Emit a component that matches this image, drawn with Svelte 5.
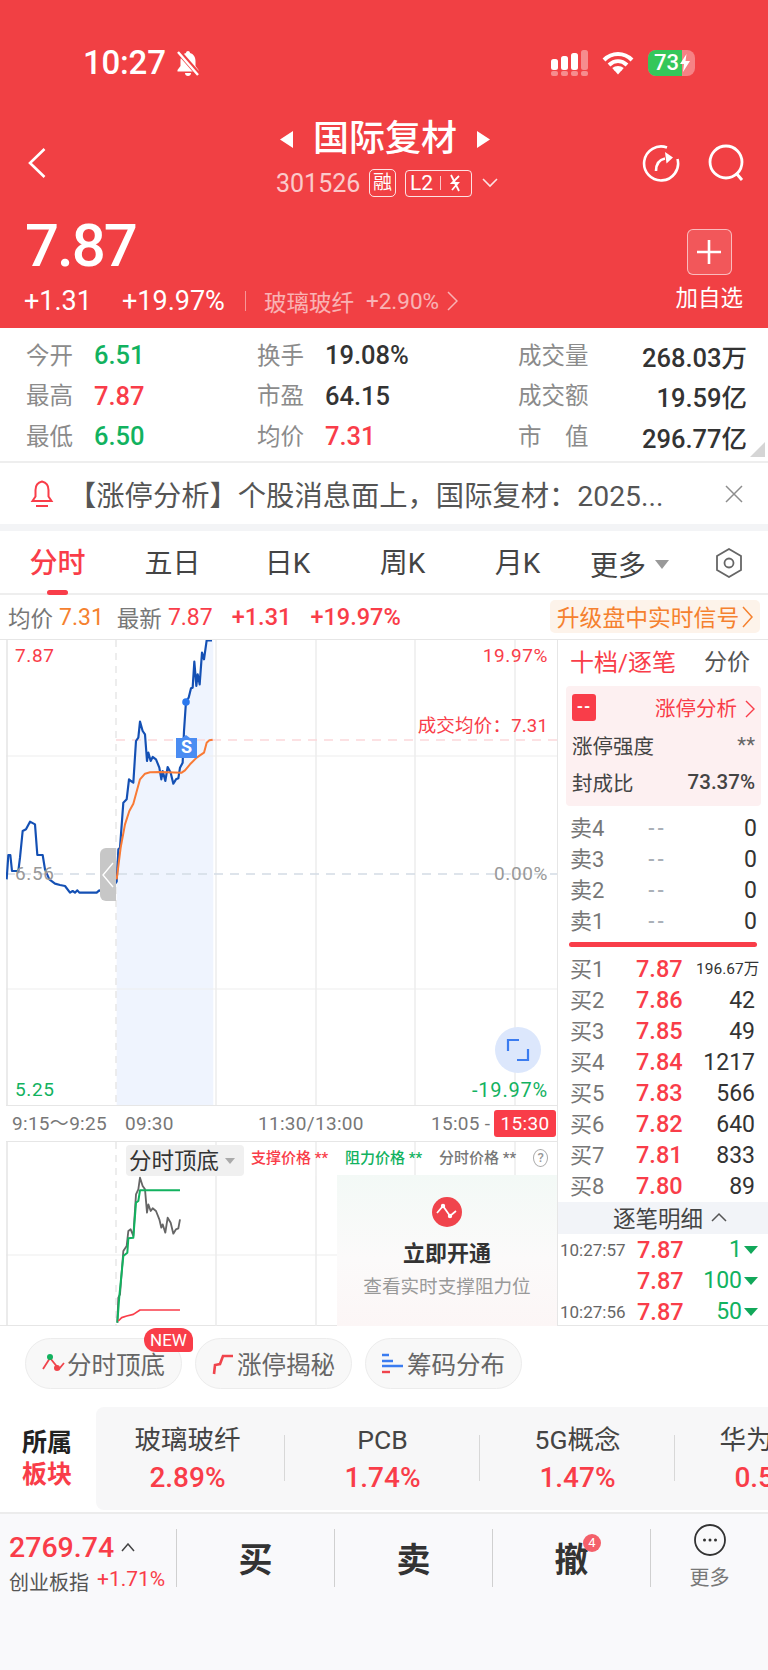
<script>
  const stats = [
    [
      { k: '今开', v: '6.51', c: 'green' },
      { k: '换手', v: '19.08%', c: '' },
      { k: '成交量', v: '268.03万', c: '' }
    ],
    [
      { k: '最高', v: '7.87', c: 'red' },
      { k: '市盈', v: '64.15', c: '' },
      { k: '成交额', v: '19.59亿', c: '' }
    ],
    [
      { k: '最低', v: '6.50', c: 'green' },
      { k: '均价', v: '7.31', c: 'red' },
      { k: '市　值', v: '296.77亿', c: '' }
    ]
  ];
  const tabs = ['分时', '五日', '日K', '周K', '月K'];
  const sells = ['卖4', '卖3', '卖2', '卖1'];
  const buys = [
    ['买1', '7.87', '196.67万'],
    ['买2', '7.86', '42'],
    ['买3', '7.85', '49'],
    ['买4', '7.84', '1217'],
    ['买5', '7.83', '566'],
    ['买6', '7.82', '640'],
    ['买7', '7.81', '833'],
    ['买8', '7.80', '89']
  ];
  const trades = [
    ['10:27:57', '7.87', '1'],
    ['', '7.87', '100'],
    ['10:27:56', '7.87', '50']
  ];
  const sectors = [
    ['玻璃玻纤', '2.89%'],
    ['PCB', '1.74%'],
    ['5G概念', '1.47%'],
    ['华为概念', '0.58%']
  ];

  // traced at 3x from the chart
  const blue = '20,745 25,672 31,672 36,720 55,720 60,680 68,600 78,595 90,572 105,580 112,672 128,672 135,715 148,745 165,758 180,762 195,765 210,785 218,780 225,785 232,778 238,785 290,785 298,778 310,785 330,785 340,765 350,752 355,655 360,650 370,515 380,505 387,445 393,450 400,455 408,330 415,320 420,272 428,300 435,310 441,390 445,365 452,390 458,378 468,385 478,410 484,445 488,420 496,450 503,408 512,425 520,458 528,445 535,442 540,410 548,395 552,300 558,212 566,200 573,172 578,170 583,92 589,165 593,130 599,160 606,65 612,85 620,28 636,28';
  const orange = '350,745 362,650 375,580 388,540 400,518 420,445 435,428 450,424 480,423 545,425 555,418 570,400 590,380 612,365 620,335 628,328 638,326';
  const area = blue.slice(blue.indexOf('350,752')) + ' 640,28 640,1425 350,1425';
  const gray = '352,1115 355,1040 360,1030 370,900 380,885 385,840 392,835 400,855 408,730 415,715 420,680 428,705 435,715 441,785 445,760 452,780 458,772 468,780 478,805 484,830 488,820 496,845 503,800 512,815 520,848 528,835 535,832 540,805';
  const greenLine = '352,1115 358,1035 370,915 382,905 385,862 400,860 408,755 415,750 420,718 540,718';
  const redLine = '355,1110 365,1100 380,1095 400,1090 420,1077 540,1077';
  const vlines = [216, 316, 415, 515];
</script>

<div class="page">
  <header class="head">
    <div class="status">
      <span class="time">10:27</span>
      <svg class="bell-off" viewBox="0 0 26 28" width="26" height="28">
        <path d="M13 2c-1 0-2 .8-2 2-3.600 1-5.500 4-5.500 8v5L2.500 21v1.500h21V21l-3-4v-5c0-4-1.900-7-5.500-8 0-1.200-1-2-2-2z" fill="#fff" />
        <path d="M10 24h6c0 1.800-1.300 3-3 3s-3-1.200-3-3z" fill="#fff" />
        <path d="M3 2l21 24" stroke="#f04145" stroke-width="5" />
        <path d="M3 3l20 23" stroke="#fff" stroke-width="2.400" />
      </svg>
      <span class="spring"></span>
      <svg viewBox="0 0 38 26" width="38" height="26">
        <rect x="0" y="9" width="7" height="11" rx="2.500" fill="#fff" />
        <rect x="10" y="6" width="7" height="14" rx="2.500" fill="#fff" />
        <rect x="20" y="3" width="7" height="17" rx="2.500" fill="#fff" />
        <rect x="30" y="0" width="7" height="20" rx="2.500" fill="#fff" opacity=".4" />
        <rect x="0" y="21" width="7" height="5" rx="2" fill="#fff" opacity=".4" />
        <rect x="10" y="21" width="7" height="5" rx="2" fill="#fff" opacity=".4" />
        <rect x="20" y="21" width="7" height="5" rx="2" fill="#fff" opacity=".4" />
        <rect x="30" y="21" width="7" height="5" rx="2" fill="#fff" opacity=".4" />
      </svg>
      <svg class="wifi" viewBox="0 0 32 24" width="32" height="24">
        <path d="M2 9c8-8 20-8 28 0M7 14c5.500-5 12.500-5 18 0M11.500 18.500c2.500-2 6.500-2 9 0" fill="none" stroke="#fff" stroke-width="4" />
        <path d="M12.500 19.500l3.500-3 3.500 3-3.500 4z" fill="#fff" />
      </svg>
      <div class="battery">
        <span class="bat-fill"></span>
        <span class="bat-num">73</span>
        <svg class="bolt" viewBox="0 0 10 18" width="10" height="18"><path d="M6.500 0L0 10h4l-1 8 7-11H5.500z" fill="#fff" /></svg>
      </div>
    </div>

    <div class="title-row">
      <svg class="back" viewBox="0 0 18 30" width="18" height="30"><path d="M16.500 1L2 15l14.500 14" fill="none" stroke="#fff" stroke-width="2.600" /></svg>
      <div class="title">
        <div class="name-line">
          <svg viewBox="0 0 13 17" width="13" height="17"><path d="M13 0v17L0 8.500z" fill="#fff" /></svg>
          <span class="name">国际复材</span>
          <svg viewBox="0 0 13 17" width="13" height="17"><path d="M0 0v17l13-8.500z" fill="#fff" /></svg>
        </div>
        <div class="code-line">
          <span class="code">301526</span>
          <span class="rong">融</span>
          <span class="l2">L2<i></i>
            <svg viewBox="0 0 14 20" width="14" height="20"><path d="M3 2l8 16M11 3L4 10h6l-6 7" fill="none" stroke="#fff" stroke-width="1.800" /></svg>
          </span>
          <svg class="caret" viewBox="0 0 16 10" width="16" height="10"><path d="M1 1l7 7 7-7" fill="none" stroke="#fff" stroke-width="1.600" /></svg>
        </div>
      </div>
      <div class="head-icons">
        <svg viewBox="0 0 38 38" width="38" height="38">
          <path d="M25 3.500A17 17 0 1 0 35.500 15" fill="none" stroke="#fff" stroke-width="2.600" />
          <path d="M14 27c0-6 2-11 9-12.500" fill="none" stroke="#fff" stroke-width="2.600" />
          <path d="M23 8l8 5.500-6.500 6z" fill="#fff" />
        </svg>
        <svg viewBox="0 0 38 38" width="38" height="38">
          <circle cx="18" cy="18" r="16" fill="none" stroke="#fff" stroke-width="2.800" />
          <path d="M28 29l6 7" stroke="#fff" stroke-width="3" />
        </svg>
      </div>
    </div>

    <div class="price-row">
      <div>
        <div class="price">7.87</div>
        <div class="change">
          <span>+1.31</span>
          <span>+19.97%</span>
          <i class="sep"></i>
          <span class="sector">玻璃玻纤</span>
          <span class="sector-pct">+2.90%</span>
          <svg viewBox="0 0 11 20" width="11" height="20"><path d="M1 1l9 9-9 9" fill="none" stroke="#fff" stroke-opacity=".6" stroke-width="1.500" /></svg>
        </div>
      </div>
      <div class="watch">
        <span class="plus">
          <svg viewBox="0 0 24 24" width="24" height="24"><path d="M12 0v24M0 12h24" stroke="#fff" stroke-width="2.600" /></svg>
        </span>
        <span class="watch-label">加自选</span>
      </div>
    </div>
  </header>

  <section class="stats">
    {#each stats as row}
      <div class="stat-row">
        {#each row as s, i}
          <div class="stat stat{i}">
            <span class="k">{s.k}</span>
            <span class="v {s.c}">{s.v}</span>
          </div>
        {/each}
      </div>
    {/each}
    <span class="corner"></span>
  </section>

  <section class="notice">
    <svg viewBox="0 0 24 28" width="24" height="28">
      <path d="M12 1.500c-4.500 1-6.500 4.500-6.500 8.500v6.500L2.500 21h19l-3-4.500V10c0-4-2-7.500-6.500-8.500zM6 26h12" fill="none" stroke="#f93d49" stroke-width="2" />
    </svg>
    <span class="notice-text">【涨停分析】个股消息面上，国际复材：2025...</span>
    <svg viewBox="0 0 18 18" width="18" height="18"><path d="M1 1l16 16M17 1L1 17" stroke="#8d8d8d" stroke-width="1.500" /></svg>
  </section>

  <nav class="tabs">
    {#each tabs as t, i}
      <div class="tab" class:on={i === 0}>{t}</div>
    {/each}
    <div class="more">更多<i class="tri"></i></div>
    <svg class="hex" viewBox="0 0 28 30" width="28" height="30">
      <path d="M14 1l12 7v14l-12 7-12-7V8z" fill="none" stroke="#666" stroke-width="1.800" />
      <circle cx="14" cy="15" r="4.500" fill="none" stroke="#666" stroke-width="1.800" />
    </svg>
  </nav>

  <section class="summary">
    <span class="gray">均价</span><span class="orange g1">7.31</span>
    <span class="gray g2">最新</span><span class="red g1">7.87</span>
    <span class="red g3">+1.31</span>
    <span class="red g3">+19.97%</span>
    <span class="upgrade">升级盘中实时信号
      <svg viewBox="0 0 11 22" width="11" height="22"><path d="M1 1l9 10-9 10" fill="none" stroke="#f5812f" stroke-width="1.500" /></svg>
    </span>
  </section>

  <main class="board">
    <div class="chart">
      <div class="upper">
        <svg viewBox="6 639 551 466" width="551" height="466">
          <g transform="translate(0 630) scale(.33333)">
            <polygon points={area} fill="#eff4fe" />
          </g>
          <path d="M6 755H557M6 988H557" stroke="#eeeeee" stroke-width="1.200" />
          <path d="M7 639V1105" stroke="#e4e4e4" stroke-width="1.500" />
          {#each vlines as x}
            <path d="M{x} 639V1105" stroke="#ececec" stroke-width="1.500" />
          {/each}
          <path d="M116 639V1105" stroke="#e2e2e2" stroke-width="1.200" stroke-dasharray="7 6" />
          <path d="M116 739H557" stroke="#fbd8da" stroke-width="1.500" stroke-dasharray="9 7" />
          <path d="M6 873H557" stroke="#d3dbe5" stroke-width="1.300" stroke-dasharray="9 7" />
          <g transform="translate(0 630) scale(.33333)">
            <polyline points={blue} fill="none" stroke="#1450b4" stroke-width="6.500" stroke-linejoin="round" />
            <polyline points={orange} fill="none" stroke="#f97a35" stroke-width="6" stroke-linejoin="round" />
          </g>
          <circle cx="186" cy="701" r="3.800" fill="#2a78ee" />
          <path d="M176 737h6l4-3 4 3h7v20h-21z" fill="#4a8cf2" />
        </svg>
        <span class="s-mark">S</span>
        <span class="hl tl red">7.87</span>
        <span class="hr tr red">19.97%</span>
        <span class="hr avg red">成交均价：7.31</span>
        <span class="hl mid mute">6.56</span>
        <span class="hr mid mute">0.00%</span>
        <span class="hl bl green">5.25</span>
        <span class="hr bl green wide">-19.97%</span>
        <span class="handle">
          <svg viewBox="0 0 12 26" width="12" height="26"><path d="M11 1L1 13l10 12" fill="none" stroke="#fff" stroke-width="1.400" /></svg>
        </span>
        <span class="expand">
          <svg viewBox="0 0 24 24" width="24" height="24"><path d="M2 13V2h11M22 11v11H11" fill="none" stroke="#3b7cf0" stroke-width="2.200" /></svg>
        </span>
      </div>

      <div class="axis">
        <span class="a1">9:15～9:25</span>
        <span class="a2">09:30</span>
        <span class="a3">11:30/13:00</span>
        <span class="a4">15:05 -</span>
        <span class="a5">15:30</span>
      </div>

      <div class="lower">
        <svg viewBox="6 1141 551 184" width="551" height="184">
          <path d="M6 1254H337" stroke="#eeeeee" stroke-width="1.200" />
          <path d="M7 1141V1325" stroke="#e4e4e4" stroke-width="1.500" />
          {#each vlines as x}
            <path d="M{x} 1141V1175" stroke="#ececec" stroke-width="1.500" />
          {/each}
          <path d="M216 1175V1325M316 1175V1325" stroke="#ececec" stroke-width="1.500" />
          <path d="M116 1141V1325" stroke="#e2e2e2" stroke-width="1.200" stroke-dasharray="7 6" />
          <g transform="translate(0 950) scale(.33333)" fill="none" stroke-linejoin="round">
            <polyline points={gray} stroke="#666" stroke-width="5.500" />
            <polyline points={greenLine} stroke="#12b25f" stroke-width="6" />
            <polyline points={redLine} stroke="#f93d49" stroke-width="5" />
          </g>
        </svg>
        <span class="picker">分时顶底<i class="tri small"></i></span>
        <div class="legend">
          <span class="red">支撑价格 **</span>
          <span class="green">阻力价格 **</span>
          <span class="gray">分时价格 **</span>
          <span class="q">?</span>
        </div>
        <div class="lock">
          <svg viewBox="0 0 30 30" width="30" height="30">
            <circle cx="15" cy="15" r="15" fill="#f0444c" />
            <path d="M5 16l6-7 7 10 6-5" fill="none" stroke="#fff" stroke-width="1.700" />
            <circle cx="11" cy="9" r="2.200" fill="#fff" /><circle cx="18" cy="19" r="2.200" fill="#fff" />
          </svg>
          <strong>立即开通</strong>
          <span>查看实时支撑阻力位</span>
        </div>
      </div>
    </div>

    <aside class="side">
      <div class="side-head"><span class="red">十档/逐笔</span><span class="dim">分价</span></div>
      <div class="limit">
        <div class="limit-row first">
          <span class="dash">--</span>
          <span class="red">涨停分析
            <svg viewBox="0 0 10 18" width="10" height="18"><path d="M1 1l8 8-8 8" fill="none" stroke="#f93d49" stroke-width="1.400" /></svg>
          </span>
        </div>
        <div class="limit-row"><span>涨停强度</span><span class="stars">**</span></div>
        <div class="limit-row"><span>封成比</span><b>73.37%</b></div>
      </div>
      <div class="sells">
        {#each sells as s}
          <div class="book"><span class="lab">{s}</span><span class="none">--</span><span class="qty">0</span></div>
        {/each}
      </div>
      <div class="bar"></div>
      <div class="buys">
        {#each buys as b, i}
          <div class="book">
            <span class="lab">{b[0]}</span>
            <span class="px red">{b[1]}</span>
            <span class="qty" class:tiny={i === 0}>{b[2]}</span>
          </div>
        {/each}
      </div>
      <div class="detail">逐笔明细
        <svg viewBox="0 0 16 10" width="16" height="10"><path d="M1 9l7-7 7 7" fill="none" stroke="#555" stroke-width="1.500" /></svg>
      </div>
      <div class="trades">
        {#each trades as t}
          <div class="trade">
            <span class="clock">{t[0]}</span>
            <span class="px red">{t[1]}</span>
            <span class="qty green">{t[2]}<i class="down"></i></span>
          </div>
        {/each}
      </div>
    </aside>
  </main>

  <section class="pills">
    <div class="pill">
      <svg viewBox="0 0 24 26" width="24" height="26">
        <path d="M2 18l7-11 9 11 5-6" fill="none" stroke="#f0444c" stroke-width="1.800" />
        <circle cx="9" cy="6" r="3" fill="#12b25f" /><circle cx="16" cy="17" r="3" fill="#f0444c" />
      </svg>分时顶底
      <span class="new">NEW</span>
    </div>
    <div class="pill">
      <svg viewBox="0 0 24 26" width="24" height="26"><path d="M3 23l1-9 5-1 3-8h10" fill="none" stroke="#f0444c" stroke-width="2.600" /></svg>涨停揭秘
    </div>
    <div class="pill">
      <svg viewBox="0 0 24 26" width="24" height="26"><path d="M1 4h7M1 10h11M1 15h21" stroke="#3b7cf0" stroke-width="2.400" /><path d="M1 21h8" stroke="#f0444c" stroke-width="2.400" /></svg>筹码分布
    </div>
  </section>

  <section class="sectors">
    <div class="sec-title"><span>所属</span><span class="red">板块</span></div>
    <div class="sec-list">
      {#each sectors as s}
        <div class="sec-item">
          <span class="sec-name">{s[0]}</span>
          <span class="sec-val red">{s[1]}</span>
        </div>
      {/each}
    </div>
  </section>

  <footer class="foot">
    <div class="index">
      <div class="idx-top"><span class="idx-num red">2769.74</span>
        <svg viewBox="0 0 14 9" width="14" height="9"><path d="M1 8l6-7 6 7" fill="none" stroke="#444" stroke-width="1.500" /></svg>
      </div>
      <div class="idx-sub"><span>创业板指</span><span class="red">+1.71%</span></div>
    </div>
    <div class="act">买</div>
    <div class="act">卖</div>
    <div class="act">撤<span class="badge">4</span></div>
    <div class="act more-btn">
      <svg viewBox="0 0 32 32" width="32" height="32">
        <circle cx="16" cy="16" r="15" fill="none" stroke="#333" stroke-width="1.800" />
        <circle cx="10.500" cy="16" r="1.500" fill="#333" /><circle cx="16" cy="16" r="1.500" fill="#333" /><circle cx="21.500" cy="16" r="1.500" fill="#333" />
      </svg>
      <span>更多</span>
    </div>
  </footer>
</div>

<style>
  :global(body) {
    margin: 0;
    background: #fff;
  }
  .page {
    width: 768px;
    height: 1670px;
    overflow: hidden;
    position: relative;
    font-family: Roboto, "Noto Sans CJK SC", sans-serif;
    color: #333;
    background: #fff;
  }
  i {
    font-style: normal;
  }
  .red {
    color: #f93d49;
  }
  .green {
    color: #12b25f;
  }
  .orange {
    color: #f5812f;
  }
  .gray {
    color: #777;
  }

  /* header */
  .head {
    height: 328px;
    background: #f14044;
    color: #fff;
    box-sizing: border-box;
    padding-top: 45px;
  }
  .status {
    display: flex;
    align-items: center;
    height: 36px;
    padding-left: 83px;
    padding-right: 73px;
  }
  .time {
    font-size: 33px;
    font-weight: 500;
    line-height: 36px;
    letter-spacing: -.2px;
  }
  .bell-off {
    margin-left: 9px;
  }
  .spring {
    flex: 1;
  }
  .wifi {
    margin-left: 13px;
  }
  .battery {
    position: relative;
    width: 47px;
    height: 26px;
    margin-left: 14px;
    border-radius: 8px;
    background: rgba(255, 255, 255, .35);
    overflow: hidden;
    display: flex;
    align-items: center;
  }
  .bat-fill {
    position: absolute;
    left: 0;
    top: 0;
    bottom: 0;
    width: 34px;
    background: #34c75a;
  }
  .bat-num {
    position: relative;
    font-size: 22px;
    font-weight: 500;
    margin-left: 6px;
    line-height: 26px;
  }
  .bolt {
    position: relative;
    margin-left: 1px;
  }
  .title-row {
    display: flex;
    height: 120px;
    position: relative;
    padding: 0 22px 0 28px;
    justify-content: space-between;
    align-items: center;
  }
  .back {
    margin-top: 43px;
  }
  .title {
    position: absolute;
    left: 276px;
    top: 38px;
  }
  .name-line {
    display: flex;
    align-items: center;
    gap: 20px;
    padding-left: 4px;
    height: 40px;
  }
  .name {
    font-size: 36px;
    font-weight: 500;
    line-height: 40px;
  }
  .code-line {
    display: flex;
    align-items: center;
    height: 34px;
    margin-top: 7px;
  }
  .code {
    font-size: 25px;
    opacity: .72;
    width: 93px;
  }
  .rong {
    width: 27px;
    height: 28px;
    border: 1.500px solid rgba(255, 255, 255, .85);
    border-radius: 5px;
    box-sizing: border-box;
    font-size: 19px;
    line-height: 25px;
    text-align: center;
  }
  .l2 {
    display: flex;
    align-items: center;
    margin-left: 9px;
    width: 67px;
    height: 27px;
    box-sizing: border-box;
    border: 1.500px solid rgba(255, 255, 255, .85);
    border-radius: 4px;
    font-size: 21px;
    padding-left: 4px;
    gap: 7px;
  }
  .l2 i {
    width: 1px;
    height: 14px;
    background: rgba(255, 255, 255, .7);
  }
  .caret {
    margin-left: 10px;
    opacity: .85;
  }
  .head-icons {
    display: flex;
    gap: 28px;
    margin-top: 43px;
    margin-left: auto;
  }
  .price-row {
    display: flex;
    justify-content: space-between;
    padding: 0 25px;
    height: 127px;
  }
  .price {
    font-size: 60px;
    font-weight: 500;
    line-height: 62px;
    margin-top: 14px;
    letter-spacing: -2px;
  }
  .change {
    display: flex;
    align-items: center;
    margin-left: -1px;
    margin-top: 7px;
    height: 34px;
    font-size: 27px;
  }
  .change > span:nth-child(2) {
    margin-left: 30px;
  }
  .sep {
    width: 1px;
    height: 20px;
    margin: 0 18px 0 20px;
    background: rgba(255, 255, 255, .45);
  }
  .sector {
    font-size: 22.500px;
    opacity: .6;
  }
  .sector-pct {
    font-size: 22.500px;
    margin: 0 8px 0 12px;
    opacity: .6;
  }
  .watch {
    display: flex;
    flex-direction: column;
    align-items: center;
    margin-top: 28px;
    margin-right: 0;
  }
  .plus {
    display: flex;
    align-items: center;
    justify-content: center;
    width: 45px;
    height: 46px;
    border: 1px solid rgba(255, 255, 255, .6);
    background: rgba(255, 255, 255, .12);
    border-radius: 6px;
    box-sizing: border-box;
  }
  .watch-label {
    font-size: 22.500px;
    line-height: 30px;
    margin-top: 8px;
  }

  /* stats */
  .stats {
    position: relative;
    height: 135px;
    box-sizing: border-box;
    padding-top: 7px;
    border-bottom: 2px solid #eeeeee;
  }
  .stat-row {
    display: grid;
    grid-template-columns: 231px 261px 229px;
    padding-left: 26px;
    height: 40.500px;
    align-items: center;
  }
  .stat {
    display: flex;
    align-items: center;
  }
  .stat2 {
    justify-content: space-between;
  }
  .k {
    font-size: 23.500px;
    color: #8b8b8b;
    width: 68px;
    flex-shrink: 0;
    margin-top: -3px;
  }
  .stat2 .k {
    width: auto;
  }
  .v {
    font-size: 25.500px;
    font-weight: 500;
  }
  .corner {
    position: absolute;
    right: 3px;
    bottom: 4px;
    width: 0;
    height: 0;
    border-left: 15px solid transparent;
    border-bottom: 15px solid #d5d5d5;
  }

  /* notice */
  .notice {
    display: flex;
    align-items: center;
    height: 61px;
    padding: 0 25px 0 30px;
    border-bottom: 7px solid #f3f4f6;
    background: #fff;
  }
  .notice-text {
    flex: 1;
    margin-left: 14px;
    font-size: 28.300px;
    color: #555;
    white-space: nowrap;
  }

  /* tabs */
  .tabs {
    position: relative;
    display: flex;
    align-items: center;
    height: 62px;
    border-bottom: 2px solid #eeeeee;
    box-sizing: content-box;
  }
  .tab {
    width: 115px;
    height: 62px;
    text-align: center;
    font-size: 28px;
    color: #444;
    position: relative;
    line-height: 66px;
  }
  .tab.on {
    color: #f93d49;
    font-weight: 500;
  }
  .tab.on::after {
    content: "";
    position: absolute;
    left: 47px;
    bottom: -2px;
    width: 21px;
    height: 5px;
    border-radius: 3px;
    background: #f93d49;
  }
  .more {
    display: flex;
    align-items: center;
    font-size: 28px;
    color: #444;
    margin-left: 15px;
    margin-top: 4px;
  }
  .tri {
    display: inline-block;
    width: 0;
    height: 0;
    margin-left: 9px;
    border-left: 7px solid transparent;
    border-right: 7px solid transparent;
    border-top: 9px solid #999;
  }
  .tri.small {
    border-left-width: 5px;
    border-right-width: 5px;
    border-top-width: 6px;
    border-top-color: #aaa;
    margin-left: 6px;
  }
  .hex {
    position: absolute;
    left: 715px;
    top: 17px;
  }

  /* summary line */
  .summary {
    display: flex;
    align-items: center;
    height: 44px;
    padding-left: 8px;
    font-size: 22.500px;
    position: relative;
  }
  .g1 {
    margin-left: 6px;
    font-size: 23px;
  }
  .g2 {
    margin-left: 13px;
  }
  .g3 {
    margin-left: 19px;
    font-size: 23.500px;
    font-weight: 500;
  }
  .upgrade {
    position: absolute;
    left: 550px;
    top: 5px;
    width: 210px;
    height: 33px;
    border-radius: 5px;
    background: #fdf3ea;
    color: #f5812f;
    display: flex;
    align-items: center;
    justify-content: center;
    font-size: 22.800px;
    gap: 3px;
  }

  /* chart + order book */
  .board {
    display: flex;
    height: 687px;
    border-top: 1.500px solid #e6e6e6;
    border-bottom: 1.500px solid #e6e6e6;
    box-sizing: border-box;
    padding-left: 6px;
  }
  .chart {
    width: 551px;
    flex-shrink: 0;
    border-right: 1.500px solid #e6e6e6;
    box-sizing: content-box;
  }
  .upper,
  .lower {
    position: relative;
  }
  .upper {
    height: 465px;
  }
  .upper svg,
  .lower svg {
    display: block;
  }
  .upper > span {
    position: absolute;
  }
  .lower {
    height: 184px;
    overflow: hidden;
  }
  .s-mark {
    left: 170px;
    top: 97px;
    width: 21px;
    text-align: center;
    color: #fff;
    font-size: 18px;
    font-weight: 700;
    line-height: 20px;
  }
  .hl,
  .hr {
    font-size: 19px;
    line-height: 24px;
    letter-spacing: .6px;
  }
  .hl {
    left: 9px;
  }
  .hr {
    right: 9px;
  }
  .hr.wide {
    font-size: 20px;
    letter-spacing: .8px;
  }
  .mute {
    color: #999;
  }
  .tl,
  .tr {
    top: 4px;
  }
  .avg {
    top: 74px;
    font-size: 18.500px;
    letter-spacing: .2px;
  }
  .mid {
    top: 222px;
  }
  .bl {
    top: 438px;
  }
  .handle {
    left: 94px;
    top: 208px;
    width: 16px;
    height: 53px;
    background: #c7c7c7;
    border-radius: 6px 0 0 6px;
    display: flex;
    align-items: center;
    justify-content: center;
  }
  .expand {
    left: 489px;
    top: 387px;
    width: 46px;
    height: 46px;
    border-radius: 50%;
    background: #dce7fc;
    display: flex;
    align-items: center;
    justify-content: center;
  }
  .axis {
    position: relative;
    height: 35px;
    background: #fff;
    border-top: 1.500px solid #e6e6e6;
    border-bottom: 1.500px solid #e6e6e6;
    box-sizing: content-box;
    font-size: 19px;
    color: #777;
    line-height: 36px;
    letter-spacing: .3px;
  }
  .axis span {
    position: absolute;
    top: 0;
    white-space: nowrap;
  }
  .a1 {
    left: 6px;
  }
  .a2 {
    left: 119px;
  }
  .a3 {
    left: 252px;
  }
  .a4 {
    left: 425px;
  }
  .axis .a5 {
    left: 488px;
    top: 4px;
    width: 62px;
    height: 27px;
    line-height: 27px;
    border-radius: 3px;
    background: #f93d49;
    color: #fff;
    text-align: center;
  }
  .picker {
    position: absolute;
    left: 120px;
    top: 3px;
    width: 118px;
    height: 31px;
    line-height: 30px;
    box-sizing: border-box;
    padding-left: 3px;
    font-size: 22.500px;
    background: #f0f0f0;
    border-radius: 4px;
    white-space: nowrap;
    display: flex;
    align-items: center;
  }
  .legend {
    position: absolute;
    left: 245px;
    top: 4px;
    right: 0;
    padding-right: 9px;
    box-sizing: border-box;
    display: flex;
    align-items: center;
    font-size: 15px;
    font-weight: 500;
    gap: 17px;
    line-height: 24px;
    white-space: nowrap;
  }
  .q {
    width: 18px;
    height: 18px;
    box-sizing: border-box;
    border: 1.500px solid #aaa;
    border-radius: 50%;
    color: #999;
    font-size: 13px;
    line-height: 15px;
    text-align: center;
    margin-left: auto;
  }
  .lock {
    position: absolute;
    left: 331px;
    top: 33px;
    width: 220px;
    height: 151px;
    box-sizing: border-box;
    padding-top: 22px;
    background: linear-gradient(#f3f9f6, #fbfafa 55%, #fcf6f6);
    display: flex;
    flex-direction: column;
    align-items: center;
  }
  .lock strong {
    font-size: 22px;
    font-weight: 700;
    margin-top: 11px;
    line-height: 32px;
  }
  .lock span {
    font-size: 18.600px;
    color: #999;
    margin-top: 4px;
    line-height: 26px;
    white-space: nowrap;
  }
  .side {
    flex: 1;
    min-width: 0;
    font-size: 23px;
  }
  .side-head {
    display: flex;
    justify-content: space-between;
    box-sizing: border-box;
    padding: 0 18px 6px 12px;
    height: 46px;
    align-items: center;
    font-size: 24px;
    margin-bottom: 0;
  }
  .dim {
    color: #555;
    font-size: 23px;
  }
  .limit {
    margin: 0 7px 0 8px;
    height: 120px;
    background: #fdf0f1;
    border-radius: 4px;
    box-sizing: border-box;
    padding: 7px 6px 0 6px;
    font-size: 20.500px;
    color: #444;
  }
  .limit-row {
    display: flex;
    justify-content: space-between;
    align-items: center;
    height: 37px;
  }
  .limit-row.first {
    height: 28px;
    margin-bottom: 5px;
  }
  .dash {
    width: 24px;
    height: 27px;
    background: #f93d49;
    color: #fff;
    border-radius: 3px;
    text-align: center;
    font-weight: 700;
    font-size: 16px;
    line-height: 26px;
    letter-spacing: 1px;
  }
  .limit-row svg {
    margin-left: 3px;
    vertical-align: -2px;
  }
  .limit-row b {
    font-weight: 500;
    font-size: 20.500px;
  }
  .stars {
    color: #666;
  }
  .sells {
    padding-top: 6px;
    margin-top: 1px;
  }
  .book {
    display: grid;
    grid-template-columns: 66px 60px 1fr;
    height: 31px;
    line-height: 31px;
    padding: 0 11px 0 12px;
    align-items: center;
  }
  .sells .book {
    grid-template-columns: 78px 40px 1fr;
  }
  .lab {
    color: #777;
    font-size: 22px;
  }
  .none {
    color: #aab0b8;
    font-size: 20px;
    letter-spacing: 2.500px;
    font-weight: 500;
  }
  .qty {
    text-align: right;
    font-size: 23px;
    white-space: nowrap;
  }
  .qty.tiny {
    font-size: 15.500px;
  }
  .px {
    font-weight: 500;
    font-size: 23.500px;
  }
  .bar {
    height: 5px;
    margin: 5px 11px 7px 11px;
    background: #f93d49;
    border-radius: 3px;
  }
  .buys .book {
    padding-right: 13px;
  }
  .detail {
    height: 32px;
    box-sizing: border-box;
    padding: 0 0 3px 14px;
    background: #f2f4f8;
    display: flex;
    align-items: center;
    justify-content: center;
    gap: 8px;
    font-size: 22.500px;
    color: #444;
    margin-top: 0;
  }
  .trade {
    display: grid;
    grid-template-columns: 77px 52px 1fr;
    height: 31px;
    align-items: center;
    padding: 0 10px 0 2px;
  }
  .clock {
    font-size: 17px;
    color: #666;
  }
  .trade .qty {
    display: flex;
    justify-content: flex-end;
    align-items: center;
  }
  .down {
    width: 0;
    height: 0;
    margin-left: 2px;
    border-left: 7px solid transparent;
    border-right: 7px solid transparent;
    border-top: 8px solid #12a85a;
  }

  /* pills */
  .pills {
    display: flex;
    gap: 13px;
    padding: 12px 0 0 25px;
    height: 81px;
    box-sizing: border-box;
  }
  .pill {
    position: relative;
    width: 157px;
    height: 51px;
    box-sizing: border-box;
    border: 1.500px solid #ececec;
    border-radius: 26px;
    background: #f8f8f8;
    display: flex;
    align-items: center;
    padding-left: 15px;
    gap: 2px;
    font-size: 24.500px;
    color: #666;
  }
  .new {
    position: absolute;
    right: -12px;
    top: -11px;
    width: 49px;
    height: 24px;
    border-radius: 12px 12px 4px 12px;
    background: #f93d49;
    color: #fff;
    font-size: 17px;
    line-height: 24px;
    text-align: center;
  }

  /* sectors */
  .sectors {
    display: flex;
    height: 103px;
  }
  .sec-title {
    width: 96px;
    box-sizing: border-box;
    padding-left: 22px;
    display: flex;
    flex-direction: column;
    justify-content: center;
    font-size: 25px;
    font-weight: 700;
    line-height: 32px;
    color: #222;
  }
  .sec-list {
    flex: 1;
    display: flex;
    overflow: hidden;
    background: #f7f7f8;
    border-radius: 8px 0 0 8px;
    padding-top: 17px;
    padding-left: 0;
    box-sizing: border-box;
  }
  .sec-item {
    width: 195px;
    flex-shrink: 0;
    height: 70px;
    display: flex;
    flex-direction: column;
    align-items: center;
    justify-content: space-between;
    position: relative;
  }
  .sec-item:first-child {
    margin-left: -6px;
  }
  .sec-item:not(:last-child)::after {
    content: "";
    position: absolute;
    right: 0;
    top: 11px;
    height: 46px;
    width: 1px;
    background: #d8d8d8;
  }
  .sec-name {
    font-size: 26.500px;
    color: #444;
    line-height: 32px;
  }
  .sec-val {
    font-size: 28px;
    font-weight: 500;
    line-height: 32px;
  }

  /* bottom toolbar */
  .foot {
    display: flex;
    height: 158px;
    margin-top: 2px;
    box-sizing: border-box;
    padding-top: 15px;
    border-top: 2px solid #ececec;
    background: #f9f9fb;
    align-items: flex-start;
  }
  .index {
    width: 176px;
    flex-shrink: 0;
    box-sizing: border-box;
    padding-left: 9px;
    height: 58px;
  }
  .idx-top {
    display: flex;
    align-items: center;
    gap: 7px;
    height: 34px;
    margin-top: 1px;
  }
  .idx-num {
    font-size: 28.500px;
    font-weight: 500;
  }
  .idx-sub {
    display: flex;
    gap: 8px;
    font-size: 20px;
    color: #555;
    margin-top: 3px;
    white-space: nowrap;
  }
  .idx-sub .red {
    font-size: 21px;
  }
  .act {
    position: relative;
    width: 158px;
    flex-shrink: 0;
    height: 58px;
    box-sizing: border-box;
    padding-bottom: 2px;
    border-left: 1.500px solid #d0d0d0;
    display: flex;
    align-items: center;
    justify-content: center;
    font-size: 34px;
    font-weight: 700;
    color: #333;
  }
  .badge {
    position: absolute;
    left: 90px;
    top: 5px;
    width: 18px;
    height: 18px;
    border-radius: 50%;
    background: #f4606a;
    color: #fff;
    font-size: 13px;
    font-weight: 400;
    line-height: 18px;
    text-align: center;
  }
  .more-btn {
    width: 118px;
    padding-bottom: 0;
    flex-direction: column;
    justify-content: flex-start;
    font-size: 20px;
    font-weight: 400;
    color: #777;
  }
  .more-btn svg {
    margin-top: -5px;
    flex-shrink: 0;
  }
  .more-btn span {
    margin-top: 6px;
    white-space: nowrap;
  }
</style>
